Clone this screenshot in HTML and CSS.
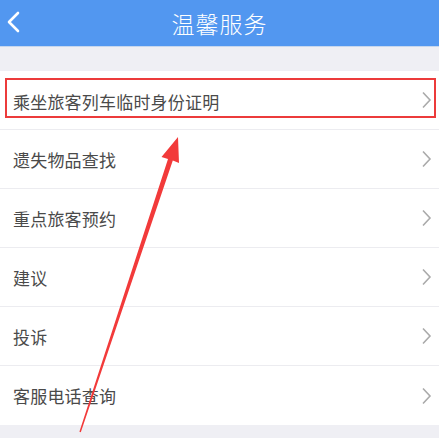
FILE: index.html
```html
<!DOCTYPE html>
<html lang="zh-CN">
<head>
  <meta charset="UTF-8">
  <meta name="viewport" content="width=device-width, initial-scale=1">
  <title>温馨服务</title>
  <link rel="stylesheet" href="styles.css">
</head>
<body>
  <div class="page">
    <!-- Header -->
    <header class="header">
      <span class="back">
        <svg width="14" height="22" viewBox="0 0 14 22"><path d="M12 2 L3 11 L12 20" fill="none" stroke="#fff" stroke-width="2.6" stroke-linecap="round" stroke-linejoin="round"/></svg>
      </span>
      <h1 class="title">温馨服务</h1>
    </header>

    <!-- Service list -->
    <ul class="list">
      <li class="item highlighted">
        <span class="label">乘坐旅客列车临时身份证明</span>
        <svg class="chev" width="11" height="18" viewBox="0 0 11 18"><path d="M2 1.5 L9 9 L2 16.5" fill="none" stroke="#aaa" stroke-width="1.6"/></svg>
        <span class="mark"></span>
      </li>
      <li class="item">
        <span class="label">遗失物品查找</span>
        <svg class="chev" width="11" height="18" viewBox="0 0 11 18"><path d="M2 1.5 L9 9 L2 16.5" fill="none" stroke="#aaa" stroke-width="1.6"/></svg>
      </li>
      <li class="item">
        <span class="label">重点旅客预约</span>
        <svg class="chev" width="11" height="18" viewBox="0 0 11 18"><path d="M2 1.5 L9 9 L2 16.5" fill="none" stroke="#aaa" stroke-width="1.6"/></svg>
      </li>
      <li class="item">
        <span class="label">建议</span>
        <svg class="chev" width="11" height="18" viewBox="0 0 11 18"><path d="M2 1.5 L9 9 L2 16.5" fill="none" stroke="#aaa" stroke-width="1.6"/></svg>
      </li>
      <li class="item">
        <span class="label">投诉</span>
        <svg class="chev" width="11" height="18" viewBox="0 0 11 18"><path d="M2 1.5 L9 9 L2 16.5" fill="none" stroke="#aaa" stroke-width="1.6"/></svg>
      </li>
      <li class="item">
        <span class="label">客服电话查询</span>
        <svg class="chev" width="11" height="18" viewBox="0 0 11 18"><path d="M2 1.5 L9 9 L2 16.5" fill="none" stroke="#aaa" stroke-width="1.6"/></svg>
      </li>
    </ul>

    <!-- Annotation arrow drawn over the list -->
    <svg class="arrow" width="439" height="438" viewBox="0 0 439 438">
      <polygon points="178,137 179,163 172.8,160.6 80.8,432.2 79.4,431.8 168,159 161.5,157" fill="#f23a3a"/>
    </svg>
  </div>
</body>
</html>
```

FILE: styles.css
```css
body {
  margin: 0;
  background: #efeff4;
  font-family: "Noto Sans CJK SC", "Noto Sans", sans-serif;
}
.page {
  position: relative;
  width: 439px;
  height: 438px;
  overflow: hidden;
}
.header {
  height: 47px;
  background: #5297f0;
  display: flex;
  align-items: center;
  justify-content: center;
  position: relative;
  border-bottom: 1px solid #c6d7ee;
  box-sizing: border-box;
}
.back {
  position: absolute;
  left: 6px;
  top: 11px;
}
.title {
  margin: 0;
  color: #fff;
  font-size: 23px;
  font-weight: 300;
  letter-spacing: 1px;
}
.list {
  list-style: none;
  margin: 24px 0 0;
  padding: 0;
  background: #fff;
}
.item {
  position: relative;
  height: 58px;
  display: flex;
  align-items: center;
  justify-content: space-between;
  padding: 0 7px 0 13px;
  border-bottom: 1px solid #ececf0;
}
.item:last-child {
  border-bottom: none;
  height: 59px;
}
.label {
  font-size: 17px;
  letter-spacing: 0.2px;
  color: #4a4a4a;
}
.highlighted .label {
  margin-top: 2px;
}
.chev {
  display: block;
}
.mark {
  position: absolute;
  left: 5px;
  right: 3px;
  top: 7px;
  bottom: 11px;
  border: 2px solid #ec3b3b;
}
.arrow {
  position: absolute;
  left: 0;
  top: 0;
}
```
